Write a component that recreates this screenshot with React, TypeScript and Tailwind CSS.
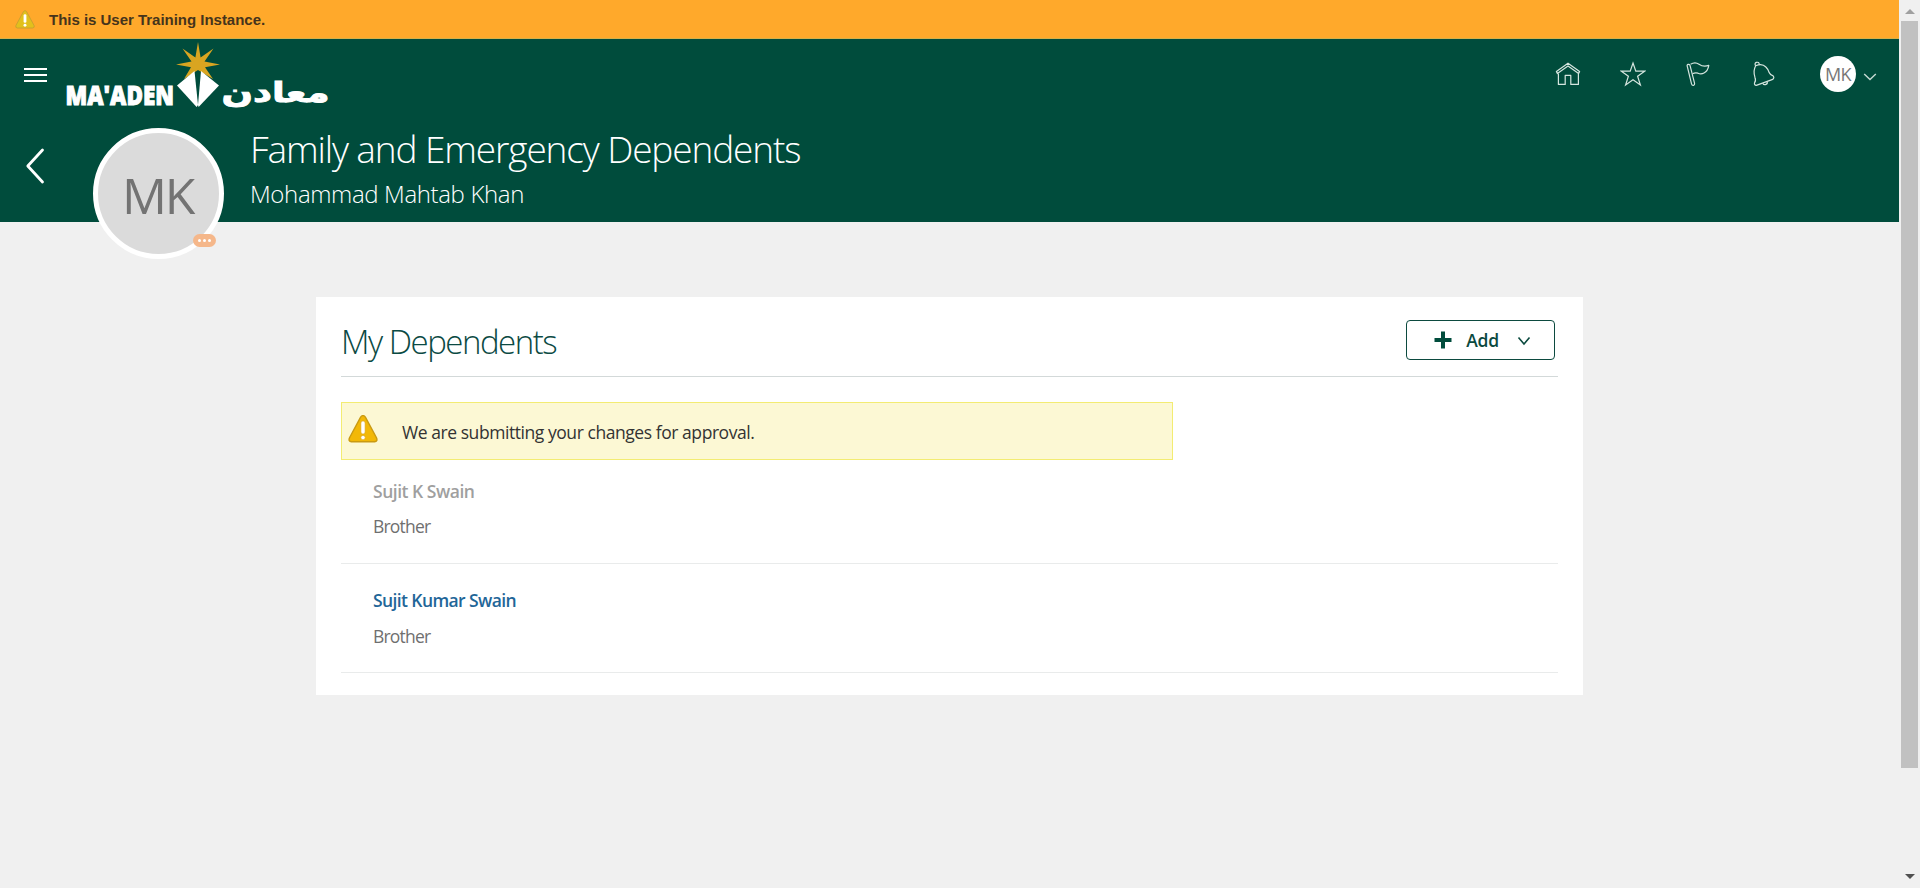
import React from "react";

const SANS = "font-['Open_Sans','Noto_Sans',sans-serif]";

function WarningIcon({ className, faded }: { className: string; faded?: boolean }) {
  return (
    <svg viewBox="0 0 30 28" className={className}>
      <path
        d="M12.6 2.2Q15 -1 17.4 2.2L28.6 23Q29.8 26.4 26.6 26.8H3.4Q0.2 26.4 1.4 23Z"
        fill={faded ? "#e2c01c" : "#f2b807"}
        stroke={faded ? "#c9a030" : "#c99a12"}
        strokeWidth="1.4"
      />
      <rect x="12.9" y="6" width="4.2" height="13" rx="2" fill="#fff" stroke="#d9a520" strokeWidth={faded ? 0 : 0.6} />
      <circle cx="15" cy="22.6" r="2.2" fill="#fff" stroke="#d9a520" strokeWidth={faded ? 0 : 0.6} />
    </svg>
  );
}

function Logo() {
  return (
    <svg viewBox="56 40 284 74" className="h-[74px] w-[284px] overflow-visible" role="img">
      <text x="65.5" y="105.3" fill="#fff" stroke="#fff" strokeWidth="1" fontFamily="'Open Sans', sans-serif" fontWeight="800" fontSize="26.5" textLength="108.5" lengthAdjust="spacingAndGlyphs">
        MA'ADEN
      </text>
      <path
        d="M198 42L200.6 57.5L213.5 48.5L204.5 61.5L220 64.5L205 67.2L213 79L198 70L184 79L191 67.2L176 64.5L191.5 61.5L182.5 48.5L195.4 57.5Z"
        fill="#d9a521"
      />
      <path d="M194.5 71L177 85.5L196.6 107L198 105Z" fill="#fff" />
      <path d="M201 71L219 85.5L198.6 107L198 105Z" fill="#fff" />
      <text x="329.5" y="101.5" direction="rtl" fill="#fff" stroke="#fff" strokeWidth="0.9" fontFamily="'DejaVu Sans', sans-serif" fontWeight="700" fontSize="28" textLength="108" lengthAdjust="spacingAndGlyphs">
        معادن
      </text>
    </svg>
  );
}

function HeaderIcons() {
  const cls = "size-[26px] fill-none stroke-[#d5e5df] stroke-[1.2]";
  return (
    <div className="flex items-center gap-[39px]">
      <svg viewBox="0 0 26 26" className={cls} strokeLinejoin="round">
        <path d="M1.4 10.6L13 2.2L24.6 10.6L23.6 12.6L13 5L2.4 12.6Z" />
        <path d="M3.4 12.5V23.4H10.2V14.4H15.8V23.4H23.4V12.5" />
      </svg>
      <svg viewBox="0 0 26 26" className={cls} strokeLinejoin="miter">
        <path d="M13 2L15.8 10.2H24.6L17.6 15.3L20.4 24L13 18.8L5.6 24L8.4 15.3L1.4 10.2H10.2Z" />
      </svg>
      <svg viewBox="0 0 26 26" className={cls} strokeLinejoin="round">
        <path d="M2.2 5.2Q1.8 3.8 3.2 3.4Q4.6 3 5 4.4L9.6 22.4Q9.8 24 8.4 24.4Q7 24.6 6.6 23.2Z" />
        <path d="M5.6 3.2Q10 .4 14 3.2Q18.4 6.4 23.8 4.4Q22.8 10.2 19 12Q16 13.6 13 12.2Q10 11.4 7.6 12.8" />
      </svg>
      <svg viewBox="-1.5 0 26 26" className={cls} strokeLinejoin="round">
        <path d="M4.2 4.8Q2.6 2.4 4.8 1.4Q7.6 .6 7.8 3.6" />
        <path d="M4.2 4.8Q10.4 1.8 14.4 6Q17 8.6 17.8 11.8Q18.6 14 21.6 14.8Q23.2 17 21.2 18.4L4.8 24.4Q2.6 24.2 3 21.8Q4.8 19.6 3.4 16.2Q1.4 9.6 4.2 4.8Z" />
        <path d="M11.2 22.2Q12.4 24.4 14.4 23.4Q16.4 22.6 15.6 20.6" />
      </svg>
    </div>
  );
}

function Dependent({ name, relation, nameClass, rowClass, gapClass }: {
  name: string;
  relation: string;
  nameClass: string;
  rowClass: string;
  gapClass: string;
}) {
  return (
    <li className={`border-b border-[#e9ebeb] pl-8 ${rowClass}`}>
      <div className={`text-[17.5px] leading-6 font-semibold whitespace-nowrap ${nameClass}`}>{name}</div>
      <div className={`text-[17.5px] leading-6 tracking-[-0.8px] text-[#6f6f6f] ${gapClass}`}>{relation}</div>
    </li>
  );
}

export default function App() {
  return (
    <div className={`flex h-[888px] w-[1920px] overflow-hidden bg-[#f0f0f0] ${SANS}`}>
      <div className="w-[1899px]">
        <div className="flex h-[39px] items-center border-b border-[#d5b04a] bg-[#ffa92b] pl-[15px]">
          <WarningIcon className="h-[19px] w-5" faded />
          <span className="mt-[2px] ml-[14px] font-['Liberation_Sans',Arial,sans-serif] text-[15px] font-bold tracking-[-0.02px] text-[#45341c]">
            This is User Training Instance.
          </span>
        </div>

        <header className="h-[183px] bg-[#004c3c] text-white">
          <div className="flex h-[76px]">
            <div className="ml-6 flex w-[23px] flex-col gap-1 pt-[29px]">
              <i className="h-[2px] bg-white" />
              <i className="h-[2px] bg-white" />
              <i className="h-[2px] bg-white" />
            </div>
            <div className="ml-[9px] pt-px">
              <Logo />
            </div>
            <div className="ml-auto flex h-[70px] items-center pr-[22px]">
              <HeaderIcons />
              <div className="ml-[44px] flex size-9 items-center justify-center rounded-full bg-white text-[18px] tracking-[-0.6px] text-[#777]">
                MK
              </div>
              <svg viewBox="0 0 14 10" className="mt-[6px] ml-[7px] h-[10px] w-[14px] fill-none stroke-[#c5dad3] stroke-[1.4]">
                <path d="M1.2 2L7 7.6L12.8 2" />
              </svg>
            </div>
          </div>

          <div className="flex h-[107px]">
            <svg viewBox="0 0 20 36" className="mt-[33px] ml-[25px] h-9 w-5 fill-none stroke-white stroke-[2.8]" strokeLinecap="round" strokeLinejoin="round">
              <path d="M17.5 2L2.8 18L17.5 34" />
            </svg>
            <div className="relative mt-[13px] ml-12 flex size-[131px] shrink-0 items-center justify-center rounded-full border-[5px] border-white bg-[#dbdbdb]">
              <span className="mt-[2px] mr-[2px] text-[50px] leading-none tracking-[-2.2px] text-[#737373]">MK</span>
              <span className="absolute top-[101px] left-[95px] flex h-[13px] w-[23px] items-center justify-center gap-[2px] rounded-full bg-[#f5b78a]">
                <i className="size-[3px] rounded-full bg-white" />
                <i className="size-[3px] rounded-full bg-white" />
                <i className="size-[3px] rounded-full bg-white" />
              </span>
            </div>
            <div className="pt-[9px] pl-[26px] font-light whitespace-nowrap">
              <h1 className="text-[37px] leading-[50px] tracking-[-1.12px]">Family and Emergency Dependents</h1>
              <p className="mt-[3px] text-[24px] leading-[34px] tracking-[-0.36px]">Mohammad Mahtab Khan</p>
            </div>
          </div>
        </header>

        <main className="mt-[75px] ml-[316px] w-[1267px] bg-white pr-[25px] pb-[22px] pl-[25px]">
          <div className="flex h-20 justify-between border-b border-[#d3d9d9]">
            <h2 className="mt-[23px] text-[33px] leading-[44px] font-light tracking-[-1.5px] whitespace-nowrap text-[#0b4a43]">My Dependents</h2>
            <button className="mt-[23px] mr-[3px] flex h-10 w-[149px] items-center rounded-[4px] border border-[#0c4a3f] pl-[27px] text-[#0b4a3f]">
              <svg viewBox="0 0 18 18" className="size-[18px] fill-[#004c3c]">
                <path d="M7 .5H11V7H17.5V11H11V17.5H7V11H.5V7H7Z" />
              </svg>
              <span className="ml-[14px] w-[33px] text-[17.5px] font-semibold tracking-[-0.3px]">Add</span>
              <svg viewBox="0 0 14 10" className="mt-[2px] ml-[18px] h-[10px] w-[14px] fill-none stroke-[#0b4a3f] stroke-[1.6]">
                <path d="M1.5 1.5L7 8L12.5 1.5" />
              </svg>
            </button>
          </div>

          <div className="mt-[25px] flex h-[58px] w-[832px] border border-[#f3ec72] bg-[#fcf8d4]">
            <WarningIcon className="mt-3 ml-[6px] h-7 w-[30px]" />
            <p className="mt-[17px] ml-6 text-[17.5px] leading-6 tracking-[-0.44px] whitespace-nowrap text-[#333]">
              We are submitting your changes for approval.
            </p>
          </div>

          <ul>
            <Dependent name="Sujit K Swain" relation="Brother" nameClass="tracking-[-0.48px] text-[#9f9f9f]" rowClass="h-[104px] pt-[19px]" gapClass="mt-[11px]" />
            <Dependent name="Sujit Kumar Swain" relation="Brother" nameClass="tracking-[-0.6px] text-[#1f6698]" rowClass="h-[109px] pt-6" gapClass="mt-3" />
          </ul>
        </main>
      </div>

      <div className="flex w-[21px] flex-col items-center pt-[9px]">
        <svg viewBox="0 0 10 5" className="h-[5px] w-[10px] fill-[#a0a0a0]">
          <path d="M0 5L5 0L10 5Z" />
        </svg>
        <div className="mt-[7px] h-[747px] w-[17px] bg-[#c1c1c1]" />
        <svg viewBox="0 0 10 5" className="mt-[106px] h-[5px] w-[10px] fill-[#505050]">
          <path d="M0 0L5 5L10 0Z" />
        </svg>
      </div>
    </div>
  );
}
